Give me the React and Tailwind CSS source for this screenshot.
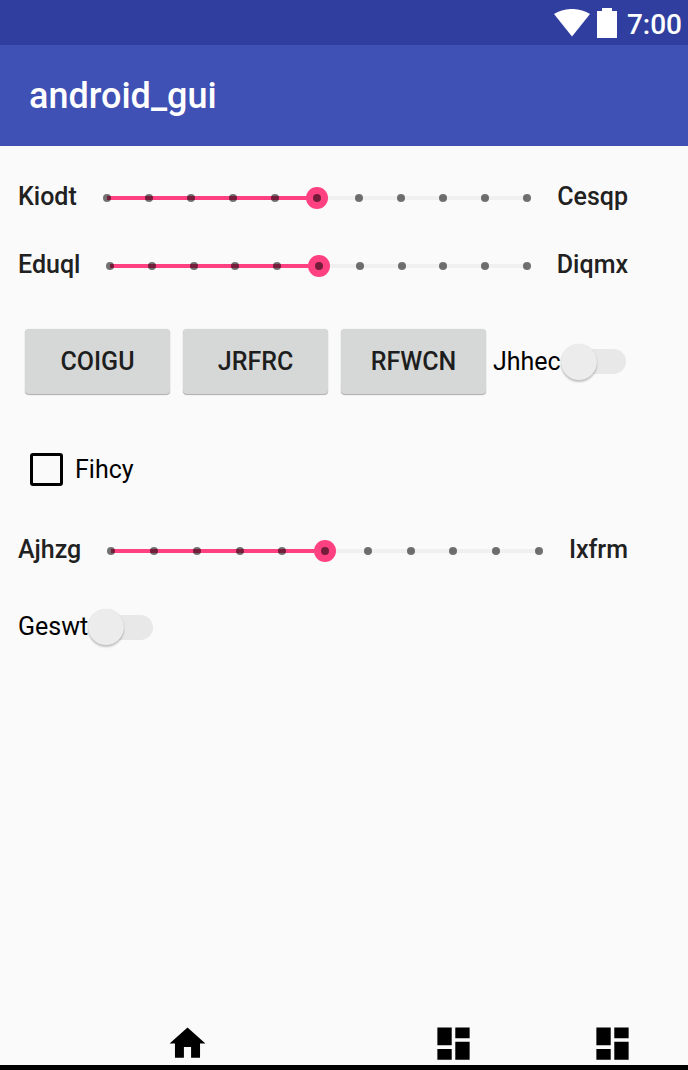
import { useId, useState } from "react";

const HOME = "M10 20v-6h4v6h5v-8h3L12 3 2 12h3v8z";
const DASHBOARD = "M3 13h8V3H3v10zm0 8h8v-6H3v6zm10 0h8V11h-8v10zm0-18v6h8V3h-8z";

function StepSlider({ start, end }) {
  const id = useId();
  const [value, setValue] = useState(5);
  const percent = `${value * 10}%`;
  return (
    <div className="flex h-[68px] items-center gap-[30px] pr-[60px] pl-[18px] font-medium text-[#212121]">
      <label htmlFor={id}>{start}</label>
      <div className="flex-1 pt-0.5">
        <div className="relative flex h-6 items-center">
          <div className="h-1 w-full bg-[#f0f0f0]">
            <div className="h-1 bg-[#ff4081]" style={{ width: percent }} />
          </div>
          <span
            className="absolute size-[22px] -translate-x-1/2 rounded-full bg-[#ff4081]"
            style={{ left: percent }}
          />
          <div className="absolute -inset-x-1 inset-y-0 flex items-center justify-between">
            {Array.from({ length: 11 }, (_, i) => (
              <span key={i} className="size-2 rounded-full bg-black/55" />
            ))}
          </div>
          <input
            id={id}
            type="range"
            min="0"
            max="10"
            value={value}
            onChange={(e) => setValue(Number(e.target.value))}
            className="absolute inset-0 w-full cursor-pointer opacity-0"
          />
        </div>
      </div>
      <span>{end}</span>
    </div>
  );
}

function Switch({ label }) {
  return (
    <label className="flex cursor-pointer items-center">
      <span>{label}</span>
      <span className="relative flex h-9 w-[65px] items-center">
        <input type="checkbox" role="switch" className="peer absolute inset-0 size-full cursor-pointer opacity-0" />
        <span className="ml-1 h-[25px] flex-1 rounded-full bg-[#e8e8e8] peer-checked:bg-[#ff4081]/30" />
        <span className="pointer-events-none absolute left-0 size-9 rounded-full bg-[#ececec] shadow-[0_2px_2px_rgba(0,0,0,0.22),0_0_1px_rgba(0,0,0,0.12)] peer-checked:left-[29px] peer-checked:bg-[#ff4081]" />
      </span>
    </label>
  );
}

function RaisedButton({ children }) {
  return (
    <button
      type="button"
      className="h-[65px] w-[145px] rounded-[4px] bg-[#d6d8d7] font-medium text-[#1e1e1e] shadow-[0_1px_1px_rgba(0,0,0,0.3),0_0_1px_rgba(0,0,0,0.2)]"
    >
      {children}
    </button>
  );
}

function NavButton({ name, path }) {
  return (
    <button type="button" aria-label={name} className="flex justify-center">
      <svg viewBox="0 0 24 24" className="size-[43px]" fill="currentColor" aria-hidden="true">
        <path d={path} />
      </svg>
    </button>
  );
}

export default function App() {
  return (
    <div className="flex min-h-screen flex-col bg-[#fafafa] font-['Roboto',sans-serif] text-[25px] leading-[30px] text-black">
      <div className="flex h-[45px] items-center justify-end bg-[#303f9f] pr-[6px] text-white">
        <svg viewBox="0 0 36 28" className="mr-[7px] h-7 w-9" fill="currentColor" aria-hidden="true">
          <path d="M0 5C10-1.700 26-1.700 36 5L18 27.500z" />
        </svg>
        <svg viewBox="0 0 20 30" className="mr-[10px] h-[30px] w-5" fill="currentColor" aria-hidden="true">
          <path d="M5 0h10v3h5v27H0V3h5z" />
        </svg>
        <span className="pt-1 text-[28px] font-medium">7:00</span>
      </div>
      <header className="flex h-[101px] items-center bg-[#3f51b5] px-[29px] text-white">
        <h1 className="text-[36px] leading-[42px] font-medium">android_gui</h1>
      </header>

      <main className="pt-[17px]">
        <StepSlider start="Kiodt" end="Cesqp" />
        <StepSlider start="Eduql" end="Diqmx" />

        <div className="mt-[30px] flex items-center pl-[25px]">
          <div className="mr-[7px] flex gap-[13px]">
            <RaisedButton>COIGU</RaisedButton>
            <RaisedButton>JRFRC</RaisedButton>
            <RaisedButton>RFWCN</RaisedButton>
          </div>
          <Switch label="Jhhec" />
        </div>

        <label className="mt-[59px] flex w-fit items-center gap-3 pl-[30px]">
          <input
            type="checkbox"
            className="size-[33px] appearance-none rounded-[3px] border-3 border-black checked:border-[#ff4081] checked:bg-[#ff4081]"
          />
          Fihcy
        </label>

        <div className="mt-[30px]">
          <StepSlider start="Ajhzg" end="Ixfrm" />
        </div>

        <div className="mt-[25px] flex pl-[18px]">
          <Switch label="Geswt" />
        </div>
      </main>

      <nav className="mt-auto grid grid-cols-[366fr_166fr_152fr] border-b-5 border-black pl-1">
        <NavButton name="Home" path={HOME} />
        <NavButton name="Dashboard" path={DASHBOARD} />
        <NavButton name="Overview" path={DASHBOARD} />
      </nav>
    </div>
  );
}
